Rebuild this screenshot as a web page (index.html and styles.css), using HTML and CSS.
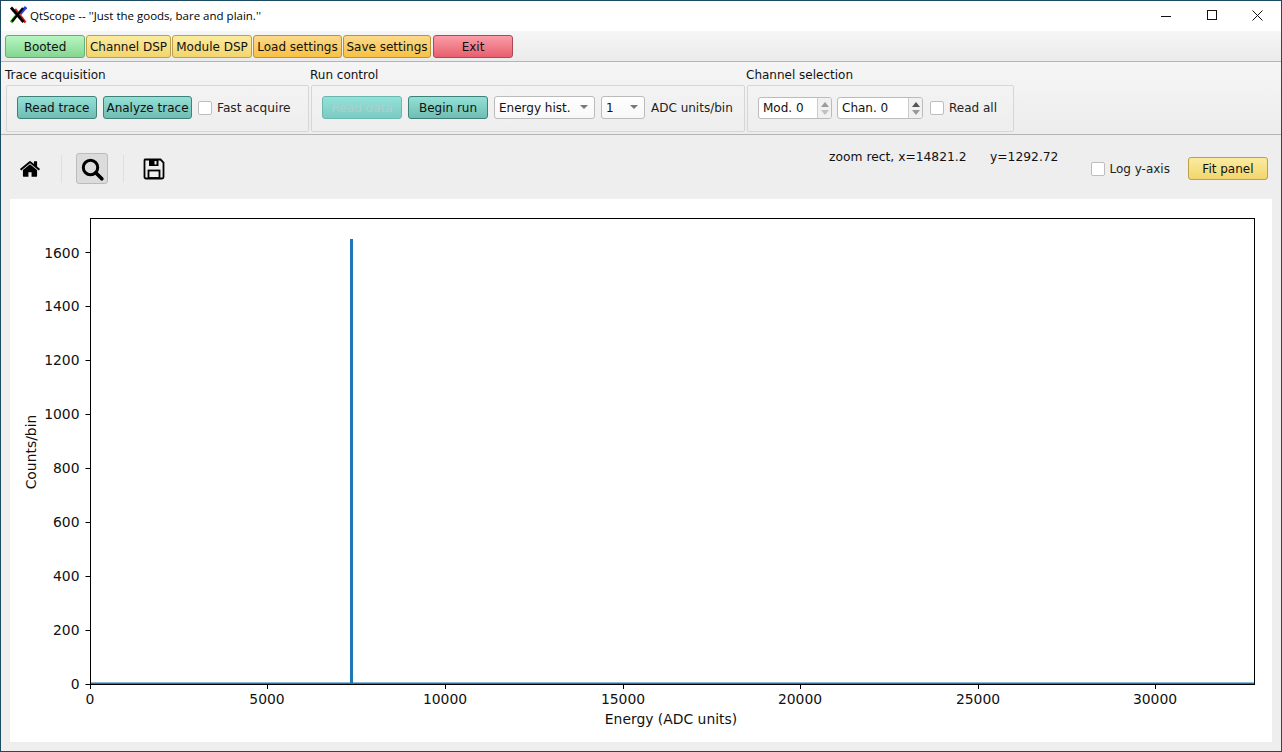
FILE: index.html
```html
<!DOCTYPE html>
<html>
<head>
    <title>QtScope</title>
    <link rel="stylesheet" href="styles.css">
</head>
<body>
<div class="window">
    <div class="titlebar">
        <svg class="app-icon" width="18" height="18" viewBox="0 0 18 18">
            <path d="M2 16.500L7 10" stroke="#3fc02a" stroke-width="3" fill="none"/>
            <path d="M11 8L17 1" stroke="#2340e0" stroke-width="3" fill="none"/>
            <path d="M6 3L16.500 16.500" stroke="#e01f1f" stroke-width="2.600" fill="none"/>
            <path d="M2 1.500L14.500 16" stroke="#000" stroke-width="2.800" fill="none"/>
            <path d="M3 15.500L14 2" stroke="#000" stroke-width="2.200" fill="none"/>
        </svg>
        <span class="title-text">QtScope -- ''Just the goods, bare and plain.''</span>
        <div class="win-controls">
            <svg width="46" height="30" viewBox="0 0 46 30"><path d="M18 15.500h10" stroke="#111" fill="none"/></svg>
            <svg width="46" height="30" viewBox="0 0 46 30"><rect x="18.500" y="9.500" width="9" height="9" stroke="#111" fill="none"/></svg>
            <svg width="46" height="30" viewBox="0 0 46 30"><path d="M17.500 9.500l10 10m0-10l-10 10" stroke="#111" fill="none"/></svg>
        </div>
    </div>

    <div class="menubar">
        <button class="btn green w80">Booted</button>
        <button class="btn yellow w85">Channel DSP</button>
        <button class="btn yellow w80">Module DSP</button>
        <button class="btn orange w89">Load settings</button>
        <button class="btn orange w88">Save settings</button>
        <button class="btn red w80 exit">Exit</button>
    </div>

    <div class="controls">
        <div class="group g1">
            <div class="group-title">Trace acquisition</div>
            <div class="group-box">
                <button class="btn teal w80">Read trace</button>
                <button class="btn teal w89">Analyze trace</button>
                <label class="check fast"><span class="box"></span>Fast acquire</label>
            </div>
        </div>
        <div class="group g2">
            <div class="group-title">Run control</div>
            <div class="group-box">
                <button class="btn teal w80 disabled">Read data</button>
                <button class="btn teal w80">Begin run</button>
                <div class="combo w101">Energy hist.<span class="arrow"></span></div>
                <div class="combo w44">1<span class="arrow"></span></div>
                <span class="unit">ADC units/bin</span>
            </div>
        </div>
        <div class="group g3">
            <div class="group-title">Channel selection</div>
            <div class="group-box">
                <div class="spin w74">Mod. 0<div class="spin-btns faded"><span class="up"></span><span class="down"></span></div></div>
                <div class="spin w86">Chan. 0<div class="spin-btns"><span class="up"></span><span class="down"></span></div></div>
                <label class="check"><span class="box"></span>Read all</label>
            </div>
        </div>
    </div>

    <div class="main">
        <div class="toolbar">
            <div class="tools">
                <div class="tool">
                    <svg width="22" height="22" viewBox="0 0 1792 1792"><path d="M1472 992v480q0 26-19 45t-45 19h-384v-384h-256v384h-384q-26 0-45-19t-19-45v-480q0-1 .5-3t.5-3l575-474 575 474q1 2 1 6zm223-69l-62 74q-8 9-21 11h-3q-13 0-21-7l-692-577-692 577q-12 8-24 7-13-2-21-11l-62-74q-8-10-7-23.5t11-21.5l719-599q32-26 76-26t76 26l244 204v-195q0-14 9-23t23-9h192q14 0 23 9t9 23v408l219 182q10 8 11 21.5t-7 23.5z" fill="#000"/></svg>
                </div>
                <div class="sep first"></div>
                <div class="tool active">
                    <svg width="24" height="24" viewBox="0 0 24 24"><circle cx="10.500" cy="10.500" r="7.200" fill="none" stroke="#000" stroke-width="3"/><path d="M15.800 15.800l6 6" stroke="#000" stroke-width="3.600" stroke-linecap="round"/></svg>
                </div>
                <div class="sep"></div>
                <div class="tool">
                    <svg width="22" height="22" viewBox="0 0 22 22"><path d="M2 1.500h15.500l3 3v14.500a1.500 1.500 0 0 1-1.500 1.500h-16a1.500 1.500 0 0 1-1.500-1.500v-16a1.500 1.500 0 0 1 .5-1.500z" fill="none" stroke="#000" stroke-width="1.800"/><path d="M6 2v6h9.500v-6z" fill="#000"/><path d="M11.500 3h2v3.500h-2z" fill="#eee"/><rect x="5.500" y="12.500" width="11" height="7.500" fill="none" stroke="#000" stroke-width="1.800"/></svg>
                </div>
            </div>
            <div class="coords"><span class="coord-x">zoom rect, x=14821.2</span><span>y=1292.72</span></div>
            <label class="check log"><span class="box"></span>Log y-axis</label>
            <button class="btn yellow w80 fit">Fit panel</button>
        </div>

        <div class="plot">
            <svg width="1262" height="543" viewBox="10 199 1262 543">
                <g stroke="#000" stroke-width="1" fill="none">
                    <path d="M85.500 684.500h5M85.500 630.500h5M85.500 576.500h5M85.500 522.500h5M85.500 468.500h5M85.500 414.500h5M85.500 360.500h5M85.500 306.500h5M85.500 252.500h5"/>
                    <path d="M90.500 684v5M267.500 684v5M445.500 684v5M623.500 684v5M800.500 684v5M978.500 684v5M1155.500 684v5"/>
                </g>
                <path d="M90.500 683.300h1164" stroke="#1f77b4" fill="none" stroke-width="1.500"/>
                <path d="M351.500 684V239" stroke="#1f77b4" fill="none" stroke-width="3"/>
                <rect x="90.500" y="218.500" width="1164" height="466" fill="none" stroke="#000"/>
                <g class="tick-y" text-anchor="end">
                    <text x="79.500" y="689">0</text>
                    <text x="79.500" y="635">200</text>
                    <text x="79.500" y="581">400</text>
                    <text x="79.500" y="527">600</text>
                    <text x="79.500" y="473">800</text>
                    <text x="79.500" y="419">1000</text>
                    <text x="79.500" y="365">1200</text>
                    <text x="79.500" y="311">1400</text>
                    <text x="79.500" y="258">1600</text>
                </g>
                <g class="tick-x" text-anchor="middle">
                    <text x="90" y="704">0</text>
                    <text x="267" y="704">5000</text>
                    <text x="445" y="704">10000</text>
                    <text x="623" y="704">15000</text>
                    <text x="800" y="704">20000</text>
                    <text x="978" y="704">25000</text>
                    <text x="1155" y="704">30000</text>
                </g>
                <text class="axis-label" x="671" y="724" text-anchor="middle">Energy (ADC units)</text>
                <text class="axis-label" x="0" y="0" text-anchor="middle" transform="translate(36 452) rotate(-90)">Counts/bin</text>
            </svg>
        </div>
    </div>
</div>
</body>
</html>
```

FILE: styles.css
```css
* { box-sizing: border-box; }
html, body { margin: 0; padding: 0; }
body { width: 1282px; height: 752px; overflow: hidden; font-family: "DejaVu Sans", sans-serif; font-size: 12px; color: #111; background: #1d4a63; }

.window { width: 1282px; height: 752px; border: 1px solid #1d4a63; background: #eeeeee; display: flex; flex-direction: column; }

.titlebar { height: 30px; background: #fff; display: flex; align-items: center; padding: 0 0 2px 8px; flex: none; }
.app-icon { flex: none; }
.title-text { font-family: "Open Sans", sans-serif; font-size: 11.500px; color: #000; margin-left: 3px; }
.win-controls { margin: 2px 0 0 auto; display: flex; }
.win-controls svg { display: block; }

.menubar { height: 31px; flex: none; display: flex; align-items: flex-start; padding: 4px 0 0 4px; gap: 1px; background: linear-gradient(#f6f6f6, #ebebeb); border-bottom: 1px solid #b4b4b4; }
.exit { margin-left: 1px; }

.btn { height: 23px; padding: 0; font: 12px "DejaVu Sans", sans-serif; color: #111; border-radius: 3px; border: 1px solid #888; flex: none; }
.w80 { width: 80px; }
.w85 { width: 85px; }
.w88 { width: 88px; }
.w89 { width: 89px; }
.green { background: linear-gradient(#b6f6c0, #84d692); border-color: #6ba97a; }
.yellow { background: linear-gradient(#fbeb9f, #f2d56d); border-color: #b9a04f; }
.orange { background: linear-gradient(#fcd98a, #f8c143); border-color: #b8933c; }
.red { background: linear-gradient(#fa9da8, #e85f6e); border-color: #a94a56; }
.teal { background: linear-gradient(#92e0d6, #70bdb3); border-color: #3f8179; }
.teal.disabled { background: linear-gradient(#93e2da, #7ccbc3); border-color: #6cb7af; color: #aecfcc; }

.controls { height: 73px; flex: none; display: flex; padding: 0 0 0 4px; background: linear-gradient(#f5f5f5, #ededed); border-bottom: 1px solid #b4b4b4; }
.group { display: flex; flex-direction: column; flex: none; }
.g1 { width: 305px; }
.g2 { width: 436px; }
.g3 { width: 268px; }
.group-title { height: 23px; padding-top: 6px; line-height: 15px; }
.group-box { margin: 0 1px; height: 47px; border: 1px solid #d6d6d6; border-radius: 2px; background: linear-gradient(#f3f3f3, #eeeeee); display: flex; align-items: center; gap: 6px; padding: 0 0 2px 10px; }
.g3 .group-box { margin-right: 0; }

.check { display: flex; align-items: center; gap: 5px; color: #222; font-size: 12px; }
.fast { font-size: 12.200px; }
.box { width: 14px; height: 14px; flex: none; background: #fff; border: 1px solid #bdbdbd; border-radius: 2px; }

.combo { height: 23px; background: linear-gradient(#fff, #f7f7f7); border: 1px solid #bbb; border-radius: 3px; display: flex; align-items: center; padding-left: 4px; position: relative; flex: none; }
.w101 { width: 101px; }
.w44 { width: 44px; }
.arrow { position: absolute; right: 6px; top: 8px; width: 0; height: 0; border-left: 4px solid transparent; border-right: 4px solid transparent; border-top: 4px solid #777; }
.unit { color: #222; }

.spin { height: 22px; background: #fff; border: 1px solid #bbb; border-radius: 3px; display: flex; align-items: center; padding-left: 4px; position: relative; flex: none; margin-top: 1px; }
.w74 { width: 74px; margin-right: -1px; }
.w86 { width: 86px; margin-right: 1px; }
.spin-btns { position: absolute; right: 0; top: 0; bottom: 0; width: 14px; border-left: 1px solid #ccc; background: #f1f1f1; border-radius: 0 2px 2px 0; display: flex; flex-direction: column; align-items: center; justify-content: center; gap: 3px; }
.up { width: 0; height: 0; border-left: 4px solid transparent; border-right: 4px solid transparent; border-bottom: 5px solid #555; }
.down { width: 0; height: 0; border-left: 4px solid transparent; border-right: 4px solid transparent; border-top: 5px solid #999; }
.faded .up, .faded .down { opacity: 0.55; }

.main { flex: 1; display: flex; flex-direction: column; background: #eeeeee; min-height: 0; }

.toolbar { height: 64px; flex: none; display: flex; align-items: flex-start; }
.tools { display: flex; align-items: center; padding: 18px 0 0 18px; }
.tool { width: 22px; height: 22px; display: flex; align-items: center; justify-content: center; }
.tool.active { width: 32px; height: 31px; background: #dcdcdc; border: 1px solid #bcbcbc; border-radius: 3px; }
.sep { width: 1px; height: 28px; background: #dfdfdf; margin: 0 14px 0 21px; }
.sep.first { margin: 0 14px 0 20px; }
.tool.active + .sep { margin: 0 19px 0 15px; }
.coords { margin-left: 664px; padding-top: 15px; line-height: 15px; color: #111; font-size: 12.300px; }
.coord-x { display: inline-block; width: 161px; }
.log { margin-left: 33px; padding-top: 27px; gap: 4px; }
.fit { margin: 22px 0 0 18px; }

.plot { margin: 0 9px 0 9px; width: 1262px; height: 543px; background: #fff; flex: none; }
.plot svg { display: block; }
.plot text { font-family: "DejaVu Sans", sans-serif; font-size: 13.900px; fill: #111; }
```
